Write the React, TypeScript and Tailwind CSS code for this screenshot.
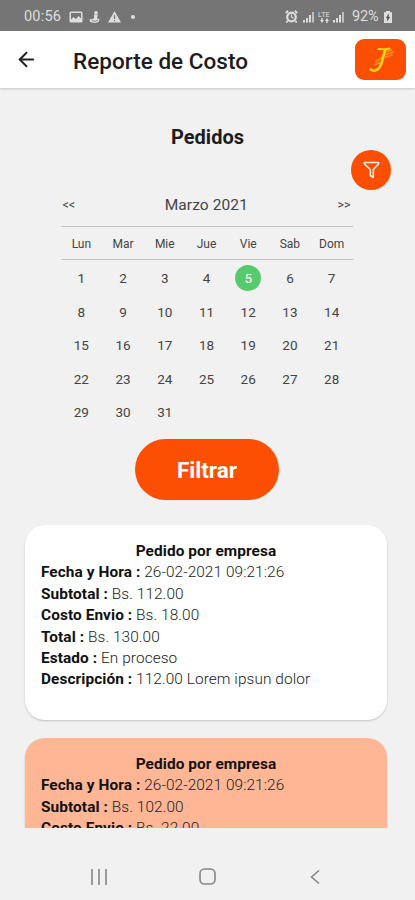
import { ArrowLeft } from "lucide-react";

interface Order {
  date: string;
  subtotal: string;
  shipping: string;
  total?: string;
  status?: string;
  description?: string;
  highlighted?: boolean;
}

const WEEK_DAYS = ["Lun", "Mar", "Mie", "Jue", "Vie", "Sab", "Dom"];
const DAYS = Array.from({ length: 31 }, (_, i) => i + 1);
const SELECTED_DAY = 5;

const ORDERS: Order[] = [
  {
    date: "26-02-2021 09:21:26",
    subtotal: "112.00",
    shipping: "18.00",
    total: "130.00",
    status: "En proceso",
    description: "112.00 Lorem ipsun dolor",
  },
  {
    date: "26-02-2021 09:21:26",
    subtotal: "102.00",
    shipping: "22.00",
    highlighted: true,
  },
];

const Signal = () => (
  <svg className="h-3 w-3" viewBox="0 0 12 12" fill="#dedede">
    <rect x="0" y="9" width="2" height="2.5" />
    <rect x="3" y="7" width="2" height="4.5" />
    <rect x="6" y="4" width="2" height="7.5" />
    <rect x="9" y="1" width="2" height="10.5" opacity="0.7" />
  </svg>
);

const StatusBar = () => (
  <div className="flex h-[31px] shrink-0 items-center bg-[#757575] pt-[2px] pr-[23px] pl-[24px] text-[#dedede]">
    <span className="w-[45px] text-[14.5px] tracking-[0.2px] whitespace-nowrap">00:56</span>
    {/* Notifications */}
    <svg className="h-3 w-[14px]" viewBox="0 0 14 12">
      <rect x="0.5" y="0.5" width="13" height="11" rx="1.5" fill="#dedede" />
      <path d="M2 2h10v5.5L9.5 5 7 8 4.5 6 2 8.5z" fill="#757575" />
    </svg>
    <svg className="ml-[6px] h-3 w-3" viewBox="0 0 12 12" fill="#dedede">
      <circle cx="7" cy="1.8" r="1.8" />
      <path d="M5 3.5h4L8 7l2.5 1.5L9.5 11 6 12 1 11 .5 8.5 5 7.5z" />
      <path d="M3 9.3 6 10.5 9 9" stroke="#757575" strokeWidth="0.8" fill="none" />
    </svg>
    <svg className="ml-[7px] h-3 w-[13px]" viewBox="0 0 13 12">
      <path d="M6.5 0 13 11.5H0z" fill="#dedede" />
      <path d="M6.5 4v4M6.5 9v1.2" stroke="#757575" strokeWidth="1.2" />
    </svg>
    <span className="ml-[10px] h-1 w-1 rounded-full bg-[#dedede]" />

    {/* System */}
    <div className="ml-auto flex items-center">
      <svg className="h-[13px] w-[13px]" viewBox="0 0 13 13" fill="none" stroke="#dedede">
        <circle cx="6.5" cy="7" r="4.3" strokeWidth="2.2" />
        <path d="M.7 3 3.2.8M12.3 3 9.8.8M2.7 10.8 1.3 12.5M10.3 10.8l1.4 1.7" strokeWidth="1.8" />
        <path d="M6.5 4.5V7l2 1.2" strokeWidth="1.2" />
      </svg>
      <span className="ml-[5px]">
        <Signal />
      </span>
      <span className="ml-[3px] flex w-3 flex-col items-center">
        <span className="text-[7.5px] leading-[7px]">LTE</span>
        <svg className="h-[5px] w-[9px]" viewBox="0 0 9 5" fill="#dedede">
          <path d="M0 2h1.3V0h1.4v2H4L2 5zM5 3l2-3 2 3H7.7v2H6.3V3z" />
        </svg>
      </span>
      <span className="ml-[3px]">
        <Signal />
      </span>
      <span className="ml-[7px] w-[28px] text-[14.5px] tracking-[-0.2px] whitespace-nowrap">92%</span>
      <svg className="ml-[4px] h-3 w-2" viewBox="0 0 8 12">
        <path d="M2 0h4v1.2h2V12H0V1.2h2z" fill="#dedede" />
        <path d="M4.6 3 2.2 7h1.5l-.4 3 2.5-4H4.3z" fill="#555" stroke="#555" strokeWidth="0.5" />
      </svg>
    </div>
  </div>
);

const Header = () => (
  <header className="flex h-[57px] shrink-0 items-center bg-white pr-[9px] pl-[15px] shadow-[0_1px_2px_rgba(0,0,0,0.18)]">
    <ArrowLeft className="h-[23px] w-[23px] text-[#222]" strokeWidth={2} />
    <h1 className="ml-[35px] pt-[4px] text-[22.5px] font-medium tracking-[0.02px] whitespace-nowrap text-[#1c1c1e]">
      Reporte de Costo
    </h1>
    <div className="ml-auto flex h-[41px] w-[51px] items-center justify-center rounded-[9px] bg-[#fc4f03]">
      <svg className="h-[30px] w-[34px]" viewBox="0 0 34 30" fill="none" strokeLinecap="round">
        <path d="M11.500 17l7-5M11 20l5-2.500M22.500 6.500l5-1.500M22 9.500l7-2.500M21 12.500l7-2.500" stroke="#f9921c" strokeWidth="1.6" />
        <path d="M14.500 4 21 4.500l4.500-1" stroke="#ffd51c" strokeWidth="2" />
        <path d="M21.500 4.500C18.500 11 19 18 15 23Q11.500 27.500 6.500 24.500" stroke="#ffd51c" strokeWidth="2.6" />
      </svg>
    </div>
  </header>
);

const Calendar = () => (
  <div className="ml-[60.5px] w-[292px] text-[#444]">
    <div className="flex h-[37px] items-center justify-between border-b border-[#c2c2c2] px-[2px] pb-[5px]">
      <button className="text-[12.5px]">&lt;&lt;</button>
      <span className="text-[15.5px] tracking-[0.1px]">Marzo 2021</span>
      <button className="text-[12.5px]">&gt;&gt;</button>
    </div>
    <div className="grid h-[33px] grid-cols-7 items-center border-b border-[#c2c2c2] pt-[2px] text-center text-[12px]">
      {WEEK_DAYS.map((day) => (
        <span key={day}>{day}</span>
      ))}
    </div>
    <div className="grid auto-rows-[33.5px] grid-cols-7 items-center justify-items-center pt-[1.5px] text-[13.5px]">
      {DAYS.map((day) => (
        <span
          key={day}
          className={
            day === SELECTED_DAY
              ? "flex h-[26px] w-[26px] items-center justify-center rounded-full bg-[#57ca6d] text-white"
              : ""
          }
        >
          {day}
        </span>
      ))}
    </div>
  </div>
);

const Field = ({ label, value }: { label: string; value: string }) => (
  <p className="whitespace-nowrap">
    <b className="font-bold text-[#111]">{label} :</b> {value}
  </p>
);

const OrderCard = ({ order }: { order: Order }) => (
  <article
    className={`h-[195px] shrink-0 rounded-[20px] px-[16px] pt-[16.5px] text-[15.4px] leading-[21.4px] font-light tracking-[0.08px] text-[#222] shadow-[0_1px_2px_rgba(0,0,0,0.2)] ${
      order.highlighted ? "bg-[#ffb695]" : "bg-white"
    }`}
  >
    <h3 className="text-center font-bold text-[#111]">Pedido por empresa</h3>
    <Field label="Fecha y Hora" value={order.date} />
    <Field label="Subtotal" value={`Bs. ${order.subtotal}`} />
    <Field label="Costo Envio" value={`Bs. ${order.shipping}`} />
    {order.total && <Field label="Total" value={`Bs. ${order.total}`} />}
    {order.status && <Field label="Estado" value={order.status} />}
    {order.description && <Field label="Descripción" value={order.description} />}
  </article>
);

const NavigationBar = () => (
  <nav className="flex h-[72px] shrink-0 items-center justify-between pt-[26px] pr-[91px] pb-[1px] pl-[91px]">
    <svg className="h-4 w-4" viewBox="0 0 16 16" stroke="#858585" strokeWidth="1.6">
      <path d="M1 0v16M8 0v16M15 0v16" />
    </svg>
    <svg className="h-[17px] w-[17px]" viewBox="0 0 17 17" fill="none" stroke="#858585" strokeWidth="1.6">
      <rect x="1" y="1" width="15" height="15" rx="4.5" />
    </svg>
    <svg className="h-4 w-4" viewBox="0 0 16 16" fill="none" stroke="#858585" strokeWidth="1.6">
      <path d="M11 1.500 3.500 8l7.500 6.500" />
    </svg>
  </nav>
);

const App = () => {
  return (
    <div className="flex h-[900px] w-[415px] flex-col overflow-hidden bg-[#f1f1f1] font-[Roboto,'Liberation_Sans',sans-serif]">
      <StatusBar />
      <Header />
      <main className="flex min-h-0 flex-1 flex-col overflow-hidden">
        <h2 className="mt-[34px] text-center text-[20px] leading-[30px] font-bold text-[#1c1c1e]">Pedidos</h2>
        <button className="mt-[-2px] mr-[24px] flex h-[40px] w-[40px] shrink-0 items-center justify-center self-end rounded-full bg-[#fc4f03]">
          <svg className="h-[18px] w-[17px]" viewBox="0 0 17 18" fill="none" stroke="#fff0e8" strokeWidth="1.6" strokeLinejoin="round">
            <path d="M1.5 1.5h14v1.5L10.3 8.5v8l-3-2v-6L1.5 3z" />
          </svg>
        </button>
        <Calendar />
        <button className="mt-[9.5px] mr-px h-[61px] w-[144px] shrink-0 self-center rounded-full bg-[#fc4f03] pt-[3px] text-[22.5px] font-bold text-white">
          Filtrar
        </button>
        <div className="mx-[25px] mt-[25px] flex flex-col gap-[18px] pr-[3px]">
          {ORDERS.map((order) => (
            <OrderCard key={order.subtotal} order={order} />
          ))}
        </div>
      </main>
      <NavigationBar />
    </div>
  );
};

export default App;
